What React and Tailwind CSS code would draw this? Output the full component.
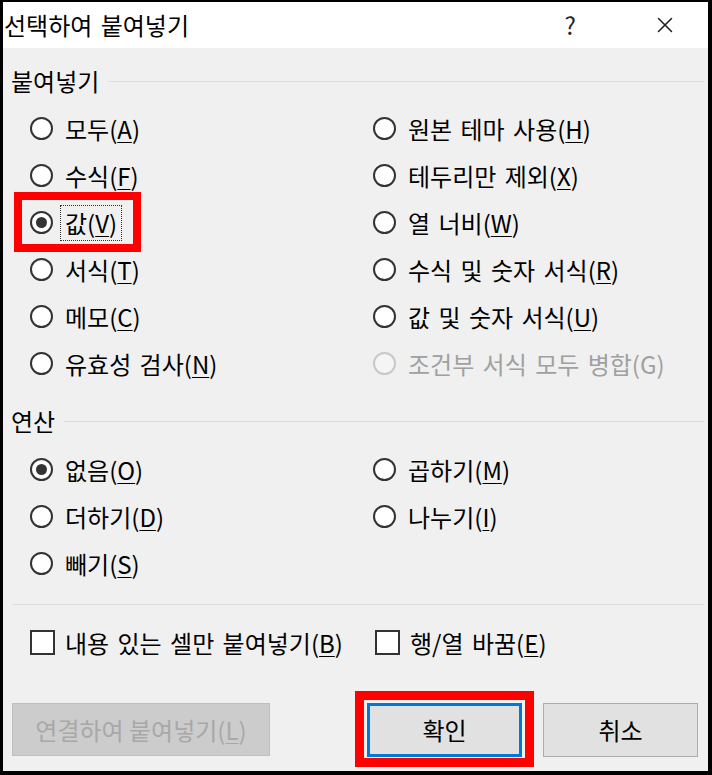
import { X } from 'lucide-react';

const FONT = { fontFamily: '"Noto Sans CJK KR", "Noto Sans", sans-serif' };

function Mn({ label, k, disabled }) {
  // label text followed by "(k)" with the access key underlined
  return (
    <span className={disabled ? 'text-[#a0a0a0]' : 'text-black'}>
      {label}(<span className={disabled ? '' : 'underline underline-offset-[3px] decoration-1'}>{k}</span>)
    </span>
  );
}

function Radio({ checked, disabled }) {
  return (
    <span
      className={`flex h-[23px] w-[23px] shrink-0 items-center justify-center rounded-full border-2 ${
        disabled ? 'border-[#c8c8c8] bg-[#f5f5f5]' : 'border-[#333] bg-white'
      }`}
    >
      {checked && <span className="h-[11px] w-[11px] rounded-full bg-[#333]" />}
    </span>
  );
}

function Option({ label, k, checked, disabled, focused, marked }) {
  return (
    <div className="relative flex h-[47px] items-center">
      <Radio checked={checked} disabled={disabled} />
      {focused ? (
        <span className="ml-[7px] border border-dotted border-[#333] px-[4px] leading-[34px]">
          <Mn label={label} k={k} />
        </span>
      ) : (
        <span className="ml-[12px] leading-[34px]">
          <Mn label={label} k={k} disabled={disabled} />
        </span>
      )}
      {marked && (
        <span className="absolute left-[-16px] top-[-7px] h-[60px] w-[127px] border-[8px] border-[#ff0000]" />
      )}
    </div>
  );
}

function Section({ title }) {
  return (
    <div className="flex h-[32px] items-center">
      <span className="ml-[8px] leading-[32px] text-black">{title}</span>
      <span className="ml-[9px] mr-[4px] h-px flex-1 bg-[#dcdcdc]" />
    </div>
  );
}

function Check({ label, k }) {
  return (
    <div className="flex h-[25px] items-center">
      <span className="h-[25px] w-[25px] shrink-0 border-2 border-[#333] bg-white" />
      <span className="ml-[10px] leading-[25px]">
        <Mn label={label} k={k} />
      </span>
    </div>
  );
}

export default function App() {
  return (
    <div
      style={FONT}
      className="flex h-[775px] w-[712px] flex-col overflow-hidden border-b-4 border-l-[3px] border-r-4 border-t-2 border-black bg-[#f0f0f0] text-[24px] [word-spacing:3px]"
    >
      {/* title bar */}
      <div className="flex h-[46px] shrink-0 items-center bg-white">
        <span className="ml-[1px] leading-[46px] text-black">선택하여 붙여넣기</span>
        <span className="ml-auto mr-[76px] leading-[46px] text-[#222]">?</span>
        <X size={26} strokeWidth={1.4} className="mr-[30px] text-[#222]" />
      </div>

      <div className="flex flex-1 flex-col">
        <div className="mt-[17px]">
          <Section title="붙여넣기" />
        </div>

        <div className="mt-[8px] grid grid-cols-[343px_1fr] pl-[27px]">
          <div className="flex flex-col">
            <Option label="모두" k="A" />
            <Option label="수식" k="F" />
            <Option label="값" k="V" checked focused marked />
            <Option label="서식" k="T" />
            <Option label="메모" k="C" />
            <Option label="유효성 검사" k="N" />
          </div>
          <div className="flex flex-col">
            <Option label="원본 테마 사용" k="H" />
            <Option label="테두리만 제외" k="X" />
            <Option label="열 너비" k="W" />
            <Option label="수식 및 숫자 서식" k="R" />
            <Option label="값 및 숫자 서식" k="U" />
            <Option label="조건부 서식 모두 병합" k="G" disabled />
          </div>
        </div>

        <div className="mt-[18px]">
          <Section title="연산" />
        </div>

        <div className="mt-[9px] grid grid-cols-[343px_1fr] pl-[27px]">
          <div className="flex flex-col">
            <Option label="없음" k="O" checked />
            <Option label="더하기" k="D" />
            <Option label="빼기" k="S" />
          </div>
          <div className="flex flex-col">
            <Option label="곱하기" k="M" />
            <Option label="나누기" k="I" />
          </div>
        </div>

        <div className="ml-[9px] mr-[4px] mt-[17px] h-px shrink-0 bg-[#dcdcdc]" />

        <div className="mt-[25px] flex pl-[27px]">
          <div className="w-[345px]">
            <Check label="내용 있는 셀만 붙여넣기" k="B" />
          </div>
          <Check label="행/열 바꿈" k="E" />
        </div>

        <div className="mt-[48px] flex pl-[9px]">
          <button className="flex h-[53px] w-[258px] items-center justify-center border border-[#bfbfbf] bg-[#cccccc] text-[#a8a8a8]">
            <span>
              연결하여 붙여넣기(<span className="underline underline-offset-[3px] decoration-1">L</span>)
            </span>
          </button>
          <div className="relative ml-[97px]">
            <button className="flex h-[54px] w-[155px] items-center justify-center border-[3px] border-[#0078d7] bg-[#e1e1e1] text-black outline outline-1 -outline-offset-4 outline-[#e1e1e1]">
              확인
            </button>
            <span className="absolute bottom-[-10px] left-[-12px] right-[-12px] top-[-12px] border-[9px] border-[#ff0000]" />
          </div>
          <button className="ml-[21px] flex h-[54px] w-[155px] items-center justify-center border border-[#adadad] bg-[#e1e1e1] text-black">
            취소
          </button>
        </div>
      </div>
    </div>
  );
}
